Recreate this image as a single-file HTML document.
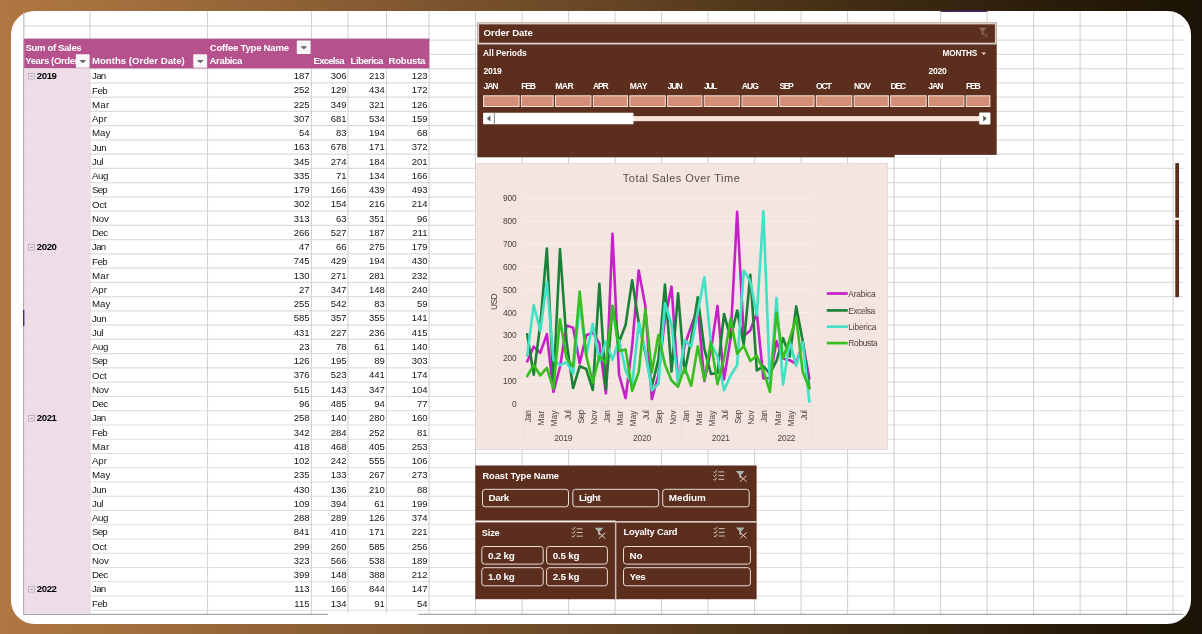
<!DOCTYPE html>
<html><head><meta charset="utf-8"><title>Coffee Sales Pivot</title>
<style>
html,body{margin:0;padding:0}
body{width:1202px;height:634px;overflow:hidden;position:relative;font-family:"Liberation Sans",sans-serif;background:linear-gradient(90deg,#af7742 0%,#a06d3c 12.5%,#8e6135 25%,#7a532d 37.5%,#674625 50%,#50371a 62.4%,#3c2912 74.9%,#2a1c0a 87.4%,#1b1305 100%);}
#root{position:absolute;left:0;top:0;width:1202px;height:634px;will-change:transform}
.panel{position:absolute;left:11.1px;top:11.1px;width:1180.2px;height:612.7px;background:#fff;border-radius:23.5px;}
svg{position:absolute;left:0;top:0}
.t,.h,.n,.y,.s,.c{position:absolute;white-space:nowrap}
.t{font-size:9.7px;line-height:14px;color:#141414}
.h{font-size:9.6px;line-height:14px;color:#fff;font-weight:bold}
.n{font-size:9.5px;line-height:14px;color:#141414;text-align:right;width:40px}
.y{font-size:9.6px;line-height:14px;color:#000;font-weight:bold}
.s{color:#fff;font-weight:bold;font-size:9px;line-height:12px}
.c{color:#4d423e;font-size:8.4px;line-height:10px}
</style></head><body>
<div id="root">
<div class="panel"></div>
<svg width="1202" height="634" viewBox="0 0 1202 634"><path d="M23.3 25.84H1183.3M23.3 40.09H1183.3M23.3 54.35H1183.3M23.3 68.60H1183.3M23.3 82.85H1183.3M23.3 97.11H1183.3M23.3 111.36H1183.3M23.3 125.61H1183.3M23.3 139.87H1183.3M23.3 154.12H1183.3M23.3 168.37H1183.3M23.3 182.63H1183.3M23.3 196.88H1183.3M23.3 211.13H1183.3M23.3 225.39H1183.3M23.3 239.64H1183.3M23.3 253.89H1183.3M23.3 268.15H1183.3M23.3 282.40H1183.3M23.3 296.65H1183.3M23.3 310.91H1183.3M23.3 325.16H1183.3M23.3 339.41H1183.3M23.3 353.67H1183.3M23.3 367.92H1183.3M23.3 382.17H1183.3M23.3 396.43H1183.3M23.3 410.68H1183.3M23.3 424.93H1183.3M23.3 439.19H1183.3M23.3 453.44H1183.3M23.3 467.69H1183.3M23.3 481.95H1183.3M23.3 496.20H1183.3M23.3 510.45H1183.3M23.3 524.71H1183.3M23.3 538.96H1183.3M23.3 553.21H1183.3M23.3 567.47H1183.3M23.3 581.72H1183.3M23.3 595.97H1183.3M23.3 610.23H1183.3" stroke="#dddddd" stroke-width="1.1" fill="none"/><path d="M89.90 11.2V614.3M207.50 11.2V614.3M311.50 11.2V614.3M348.00 11.2V614.3M386.50 11.2V614.3M429.10 11.2V614.3M475.60 11.2V614.3M522.10 11.2V614.3M568.60 11.2V614.3M615.10 11.2V614.3M661.60 11.2V614.3M708.10 11.2V614.3M754.60 11.2V614.3M801.10 11.2V614.3M847.60 11.2V614.3M894.10 11.2V614.3M940.60 11.2V614.3M987.10 11.2V614.3M1033.60 11.2V614.3M1080.10 11.2V614.3M1126.60 11.2V614.3M1173.10 11.2V614.3" stroke="#d3d3d3" stroke-width="1.1" fill="none"/><path d="M23.8 12.6V38.6" stroke="#c4c4c4" stroke-width="1.3" fill="none"/><path d="M23.8 38.6V614.3" stroke="#a49aa0" stroke-width="1.2" fill="none"/><path d="M23.3 614.3H1183.3" stroke="#a8a8a8" stroke-width="1.2" fill="none"/><rect x="328.00" y="613.00" width="90.30" height="3.00" fill="#fff"/><path d="M940.6 11.4H987.3" stroke="#3c2a7a" stroke-width="1.4"/><path d="M24 310V326" stroke="#3b2a86" stroke-width="2"/><rect x="1175.30" y="163.10" width="3.70" height="54.60" fill="#5b2e1e"/><rect x="1175.30" y="219.90" width="3.70" height="77.30" fill="#5b2e1e"/><rect x="24.20" y="39.30" width="405.10" height="29.05" fill="#b5518c"/><rect x="24.20" y="38.60" width="405.10" height="1.00" fill="#9a477b"/><rect x="24.40" y="68.35" width="65.30" height="545.45" fill="#eedde7"/></svg>
<div class="h" style="left:25.4px;top:40.5px;letter-spacing:-0.357px;">Sum of Sales</div>
<div class="h" style="left:209.8px;top:40.5px;letter-spacing:-0.253px;">Coffee Type Name</div>
<div class="h" style="left:25.2px;top:54.4px;width:50.4px;overflow:hidden;letter-spacing:-0.391px;">Years (Order Date)</div>
<div class="h" style="left:92.0px;top:54.4px;">Months (Order Date)</div>
<div class="h" style="left:209.6px;top:54.4px;letter-spacing:-0.402px;">Arabica</div>
<div class="h" style="left:313.6px;top:54.4px;letter-spacing:-0.795px;">Excelsa</div>
<div class="h" style="left:350.6px;top:54.4px;letter-spacing:-0.577px;">Liberica</div>
<div class="h" style="left:388.6px;top:54.4px;letter-spacing:-0.257px;">Robusta</div>
<svg width="1202" height="634" viewBox="0 0 1202 634"><rect x="75.80" y="54.25" width="13.8" height="13.6" rx="0.8" fill="#f8f6f7"/><path d="M79.4 60.1h6.8l-3.4 3.2z" fill="#666"/><rect x="193.30" y="54.25" width="13.8" height="13.6" rx="0.8" fill="#f8f6f7"/><path d="M196.9 60.1h6.8l-3.4 3.2z" fill="#666"/><rect x="296.80" y="40.39" width="13.8" height="13.6" rx="0.8" fill="#f8f6f7"/><path d="M300.4 46.3h6.8l-3.4 3.2z" fill="#666"/><rect x="28.70" y="73.43" width="5.60" height="5.60" fill="#f3e7ee" stroke="#aa9ea6" stroke-width="0.7"/><path d="M30 76.23h3" stroke="#7a7a7a" stroke-width="0.8"/><rect x="28.70" y="244.47" width="5.60" height="5.60" fill="#f3e7ee" stroke="#aa9ea6" stroke-width="0.7"/><path d="M30 247.27h3" stroke="#7a7a7a" stroke-width="0.8"/><rect x="28.70" y="415.51" width="5.60" height="5.60" fill="#f3e7ee" stroke="#aa9ea6" stroke-width="0.7"/><path d="M30 418.31h3" stroke="#7a7a7a" stroke-width="0.8"/><rect x="28.70" y="586.55" width="5.60" height="5.60" fill="#f3e7ee" stroke="#aa9ea6" stroke-width="0.7"/><path d="M30 589.35h3" stroke="#7a7a7a" stroke-width="0.8"/></svg>
<div class="y" style="left:36.8px;top:69.1px;letter-spacing:-0.414px;">2019</div>
<div class="t" style="left:92.0px;top:69.3px;letter-spacing:-0.680px;">Jan</div>
<div class="n" style="left:269.5px;top:69.1px">187</div>
<div class="n" style="left:306.5px;top:69.1px">306</div>
<div class="n" style="left:344.9px;top:69.1px">213</div>
<div class="n" style="left:387.5px;top:69.1px">123</div>
<div class="t" style="left:92.0px;top:83.6px;letter-spacing:-0.538px;">Feb</div>
<div class="n" style="left:269.5px;top:83.4px">252</div>
<div class="n" style="left:306.5px;top:83.4px">129</div>
<div class="n" style="left:344.9px;top:83.4px">434</div>
<div class="n" style="left:387.5px;top:83.4px">172</div>
<div class="t" style="left:92.0px;top:97.8px;letter-spacing:0.232px;">Mar</div>
<div class="n" style="left:269.5px;top:97.6px">225</div>
<div class="n" style="left:306.5px;top:97.6px">349</div>
<div class="n" style="left:344.9px;top:97.6px">321</div>
<div class="n" style="left:387.5px;top:97.6px">126</div>
<div class="t" style="left:92.0px;top:112.1px;letter-spacing:-0.098px;">Apr</div>
<div class="n" style="left:269.5px;top:111.9px">307</div>
<div class="n" style="left:306.5px;top:111.9px">681</div>
<div class="n" style="left:344.9px;top:111.9px">534</div>
<div class="n" style="left:387.5px;top:111.9px">159</div>
<div class="t" style="left:92.0px;top:126.3px;letter-spacing:0.025px;">May</div>
<div class="n" style="left:269.5px;top:126.1px">54</div>
<div class="n" style="left:306.5px;top:126.1px">83</div>
<div class="n" style="left:344.9px;top:126.1px">194</div>
<div class="n" style="left:387.5px;top:126.1px">68</div>
<div class="t" style="left:92.0px;top:140.6px;letter-spacing:-0.546px;">Jun</div>
<div class="n" style="left:269.5px;top:140.4px">163</div>
<div class="n" style="left:306.5px;top:140.4px">678</div>
<div class="n" style="left:344.9px;top:140.4px">171</div>
<div class="n" style="left:387.5px;top:140.4px">372</div>
<div class="t" style="left:92.0px;top:154.8px;letter-spacing:-0.467px;">Jul</div>
<div class="n" style="left:269.5px;top:154.6px">345</div>
<div class="n" style="left:306.5px;top:154.6px">274</div>
<div class="n" style="left:344.9px;top:154.6px">184</div>
<div class="n" style="left:387.5px;top:154.6px">201</div>
<div class="t" style="left:92.0px;top:169.1px;letter-spacing:-0.420px;">Aug</div>
<div class="n" style="left:269.5px;top:168.9px">335</div>
<div class="n" style="left:306.5px;top:168.9px">71</div>
<div class="n" style="left:344.9px;top:168.9px">134</div>
<div class="n" style="left:387.5px;top:168.9px">166</div>
<div class="t" style="left:92.0px;top:183.4px;letter-spacing:-0.753px;">Sep</div>
<div class="n" style="left:269.5px;top:183.2px">179</div>
<div class="n" style="left:306.5px;top:183.2px">166</div>
<div class="n" style="left:344.9px;top:183.2px">439</div>
<div class="n" style="left:387.5px;top:183.2px">493</div>
<div class="t" style="left:92.0px;top:197.6px;letter-spacing:-0.130px;">Oct</div>
<div class="n" style="left:269.5px;top:197.4px">302</div>
<div class="n" style="left:306.5px;top:197.4px">154</div>
<div class="n" style="left:344.9px;top:197.4px">216</div>
<div class="n" style="left:387.5px;top:197.4px">214</div>
<div class="t" style="left:92.0px;top:211.9px;letter-spacing:-0.250px;">Nov</div>
<div class="n" style="left:269.5px;top:211.7px">313</div>
<div class="n" style="left:306.5px;top:211.7px">63</div>
<div class="n" style="left:344.9px;top:211.7px">351</div>
<div class="n" style="left:387.5px;top:211.7px">96</div>
<div class="t" style="left:92.0px;top:226.1px;letter-spacing:-0.517px;">Dec</div>
<div class="n" style="left:269.5px;top:225.9px">266</div>
<div class="n" style="left:306.5px;top:225.9px">527</div>
<div class="n" style="left:344.9px;top:225.9px">187</div>
<div class="n" style="left:387.5px;top:225.9px">211</div>
<div class="y" style="left:36.8px;top:240.2px;letter-spacing:-0.414px;">2020</div>
<div class="t" style="left:92.0px;top:240.4px;letter-spacing:-0.680px;">Jan</div>
<div class="n" style="left:269.5px;top:240.2px">47</div>
<div class="n" style="left:306.5px;top:240.2px">66</div>
<div class="n" style="left:344.9px;top:240.2px">275</div>
<div class="n" style="left:387.5px;top:240.2px">179</div>
<div class="t" style="left:92.0px;top:254.6px;letter-spacing:-0.538px;">Feb</div>
<div class="n" style="left:269.5px;top:254.4px">745</div>
<div class="n" style="left:306.5px;top:254.4px">429</div>
<div class="n" style="left:344.9px;top:254.4px">194</div>
<div class="n" style="left:387.5px;top:254.4px">430</div>
<div class="t" style="left:92.0px;top:268.9px;letter-spacing:0.232px;">Mar</div>
<div class="n" style="left:269.5px;top:268.7px">130</div>
<div class="n" style="left:306.5px;top:268.7px">271</div>
<div class="n" style="left:344.9px;top:268.7px">281</div>
<div class="n" style="left:387.5px;top:268.7px">232</div>
<div class="t" style="left:92.0px;top:283.1px;letter-spacing:-0.098px;">Apr</div>
<div class="n" style="left:269.5px;top:282.9px">27</div>
<div class="n" style="left:306.5px;top:282.9px">347</div>
<div class="n" style="left:344.9px;top:282.9px">148</div>
<div class="n" style="left:387.5px;top:282.9px">240</div>
<div class="t" style="left:92.0px;top:297.4px;letter-spacing:0.025px;">May</div>
<div class="n" style="left:269.5px;top:297.2px">255</div>
<div class="n" style="left:306.5px;top:297.2px">542</div>
<div class="n" style="left:344.9px;top:297.2px">83</div>
<div class="n" style="left:387.5px;top:297.2px">59</div>
<div class="t" style="left:92.0px;top:311.6px;letter-spacing:-0.546px;">Jun</div>
<div class="n" style="left:269.5px;top:311.4px">585</div>
<div class="n" style="left:306.5px;top:311.4px">357</div>
<div class="n" style="left:344.9px;top:311.4px">355</div>
<div class="n" style="left:387.5px;top:311.4px">141</div>
<div class="t" style="left:92.0px;top:325.9px;letter-spacing:-0.467px;">Jul</div>
<div class="n" style="left:269.5px;top:325.7px">431</div>
<div class="n" style="left:306.5px;top:325.7px">227</div>
<div class="n" style="left:344.9px;top:325.7px">236</div>
<div class="n" style="left:387.5px;top:325.7px">415</div>
<div class="t" style="left:92.0px;top:340.1px;letter-spacing:-0.420px;">Aug</div>
<div class="n" style="left:269.5px;top:339.9px">23</div>
<div class="n" style="left:306.5px;top:339.9px">78</div>
<div class="n" style="left:344.9px;top:339.9px">61</div>
<div class="n" style="left:387.5px;top:339.9px">140</div>
<div class="t" style="left:92.0px;top:354.4px;letter-spacing:-0.753px;">Sep</div>
<div class="n" style="left:269.5px;top:354.2px">126</div>
<div class="n" style="left:306.5px;top:354.2px">195</div>
<div class="n" style="left:344.9px;top:354.2px">89</div>
<div class="n" style="left:387.5px;top:354.2px">303</div>
<div class="t" style="left:92.0px;top:368.6px;letter-spacing:-0.130px;">Oct</div>
<div class="n" style="left:269.5px;top:368.4px">376</div>
<div class="n" style="left:306.5px;top:368.4px">523</div>
<div class="n" style="left:344.9px;top:368.4px">441</div>
<div class="n" style="left:387.5px;top:368.4px">174</div>
<div class="t" style="left:92.0px;top:382.9px;letter-spacing:-0.250px;">Nov</div>
<div class="n" style="left:269.5px;top:382.7px">515</div>
<div class="n" style="left:306.5px;top:382.7px">143</div>
<div class="n" style="left:344.9px;top:382.7px">347</div>
<div class="n" style="left:387.5px;top:382.7px">104</div>
<div class="t" style="left:92.0px;top:397.2px;letter-spacing:-0.517px;">Dec</div>
<div class="n" style="left:269.5px;top:397.0px">96</div>
<div class="n" style="left:306.5px;top:397.0px">485</div>
<div class="n" style="left:344.9px;top:397.0px">94</div>
<div class="n" style="left:387.5px;top:397.0px">77</div>
<div class="y" style="left:36.8px;top:411.2px;letter-spacing:-0.414px;">2021</div>
<div class="t" style="left:92.0px;top:411.4px;letter-spacing:-0.680px;">Jan</div>
<div class="n" style="left:269.5px;top:411.2px">258</div>
<div class="n" style="left:306.5px;top:411.2px">140</div>
<div class="n" style="left:344.9px;top:411.2px">280</div>
<div class="n" style="left:387.5px;top:411.2px">160</div>
<div class="t" style="left:92.0px;top:425.7px;letter-spacing:-0.538px;">Feb</div>
<div class="n" style="left:269.5px;top:425.5px">342</div>
<div class="n" style="left:306.5px;top:425.5px">284</div>
<div class="n" style="left:344.9px;top:425.5px">252</div>
<div class="n" style="left:387.5px;top:425.5px">81</div>
<div class="t" style="left:92.0px;top:439.9px;letter-spacing:0.232px;">Mar</div>
<div class="n" style="left:269.5px;top:439.7px">418</div>
<div class="n" style="left:306.5px;top:439.7px">468</div>
<div class="n" style="left:344.9px;top:439.7px">405</div>
<div class="n" style="left:387.5px;top:439.7px">253</div>
<div class="t" style="left:92.0px;top:454.2px;letter-spacing:-0.098px;">Apr</div>
<div class="n" style="left:269.5px;top:454.0px">102</div>
<div class="n" style="left:306.5px;top:454.0px">242</div>
<div class="n" style="left:344.9px;top:454.0px">555</div>
<div class="n" style="left:387.5px;top:454.0px">106</div>
<div class="t" style="left:92.0px;top:468.4px;letter-spacing:0.025px;">May</div>
<div class="n" style="left:269.5px;top:468.2px">235</div>
<div class="n" style="left:306.5px;top:468.2px">133</div>
<div class="n" style="left:344.9px;top:468.2px">267</div>
<div class="n" style="left:387.5px;top:468.2px">273</div>
<div class="t" style="left:92.0px;top:482.7px;letter-spacing:-0.546px;">Jun</div>
<div class="n" style="left:269.5px;top:482.5px">430</div>
<div class="n" style="left:306.5px;top:482.5px">136</div>
<div class="n" style="left:344.9px;top:482.5px">210</div>
<div class="n" style="left:387.5px;top:482.5px">88</div>
<div class="t" style="left:92.0px;top:496.9px;letter-spacing:-0.467px;">Jul</div>
<div class="n" style="left:269.5px;top:496.7px">109</div>
<div class="n" style="left:306.5px;top:496.7px">394</div>
<div class="n" style="left:344.9px;top:496.7px">61</div>
<div class="n" style="left:387.5px;top:496.7px">199</div>
<div class="t" style="left:92.0px;top:511.2px;letter-spacing:-0.420px;">Aug</div>
<div class="n" style="left:269.5px;top:511.0px">288</div>
<div class="n" style="left:306.5px;top:511.0px">289</div>
<div class="n" style="left:344.9px;top:511.0px">126</div>
<div class="n" style="left:387.5px;top:511.0px">374</div>
<div class="t" style="left:92.0px;top:525.4px;letter-spacing:-0.753px;">Sep</div>
<div class="n" style="left:269.5px;top:525.2px">841</div>
<div class="n" style="left:306.5px;top:525.2px">410</div>
<div class="n" style="left:344.9px;top:525.2px">171</div>
<div class="n" style="left:387.5px;top:525.2px">221</div>
<div class="t" style="left:92.0px;top:539.7px;letter-spacing:-0.130px;">Oct</div>
<div class="n" style="left:269.5px;top:539.5px">299</div>
<div class="n" style="left:306.5px;top:539.5px">260</div>
<div class="n" style="left:344.9px;top:539.5px">585</div>
<div class="n" style="left:387.5px;top:539.5px">256</div>
<div class="t" style="left:92.0px;top:553.9px;letter-spacing:-0.250px;">Nov</div>
<div class="n" style="left:269.5px;top:553.7px">323</div>
<div class="n" style="left:306.5px;top:553.7px">566</div>
<div class="n" style="left:344.9px;top:553.7px">538</div>
<div class="n" style="left:387.5px;top:553.7px">189</div>
<div class="t" style="left:92.0px;top:568.2px;letter-spacing:-0.517px;">Dec</div>
<div class="n" style="left:269.5px;top:568.0px">399</div>
<div class="n" style="left:306.5px;top:568.0px">148</div>
<div class="n" style="left:344.9px;top:568.0px">388</div>
<div class="n" style="left:387.5px;top:568.0px">212</div>
<div class="y" style="left:36.8px;top:582.2px;letter-spacing:-0.414px;">2022</div>
<div class="t" style="left:92.0px;top:582.4px;letter-spacing:-0.680px;">Jan</div>
<div class="n" style="left:269.5px;top:582.2px">113</div>
<div class="n" style="left:306.5px;top:582.2px">166</div>
<div class="n" style="left:344.9px;top:582.2px">844</div>
<div class="n" style="left:387.5px;top:582.2px">147</div>
<div class="t" style="left:92.0px;top:596.7px;letter-spacing:-0.538px;">Feb</div>
<div class="n" style="left:269.5px;top:596.5px">115</div>
<div class="n" style="left:306.5px;top:596.5px">134</div>
<div class="n" style="left:344.9px;top:596.5px">91</div>
<div class="n" style="left:387.5px;top:596.5px">54</div>
<svg width="1202" height="634" viewBox="0 0 1202 634"><rect x="477.30" y="22.60" width="519.40" height="134.70" fill="#5b2e1e"/><rect x="894.60" y="154.90" width="102.60" height="2.90" fill="#fff"/><rect x="478.20" y="23.50" width="517.60" height="20.10" fill="none" stroke="#d9cec7" stroke-width="1.8"/><path d="M981.4 52.5h4.8l-2.4 2.6z" fill="#e8dcd6"/><g opacity="0.36" fill="none" stroke="#d8ccc6" stroke-width="1"><path d="M978.6 27.6h8l-3 3.6v4.2l-2 -1.2v-3z" fill="#d8ccc6" stroke="none"/><path d="M983.6 33.2l4.6 4.6M988.2 33.2l-4.6 4.6"/></g><rect x="483.60" y="95.80" width="35.48" height="10.70" fill="#d48e75" stroke="#f6e3db" stroke-width="1.0"/><rect x="521.38" y="95.80" width="31.83" height="10.70" fill="#d48e75" stroke="#f6e3db" stroke-width="1.0"/><rect x="555.51" y="95.80" width="35.48" height="10.70" fill="#d48e75" stroke="#f6e3db" stroke-width="1.0"/><rect x="593.29" y="95.80" width="34.26" height="10.70" fill="#d48e75" stroke="#f6e3db" stroke-width="1.0"/><rect x="629.86" y="95.80" width="35.48" height="10.70" fill="#d48e75" stroke="#f6e3db" stroke-width="1.0"/><rect x="667.64" y="95.80" width="34.26" height="10.70" fill="#d48e75" stroke="#f6e3db" stroke-width="1.0"/><rect x="704.20" y="95.80" width="35.48" height="10.70" fill="#d48e75" stroke="#f6e3db" stroke-width="1.0"/><rect x="741.99" y="95.80" width="35.48" height="10.70" fill="#d48e75" stroke="#f6e3db" stroke-width="1.0"/><rect x="779.77" y="95.80" width="34.26" height="10.70" fill="#d48e75" stroke="#f6e3db" stroke-width="1.0"/><rect x="816.33" y="95.80" width="35.48" height="10.70" fill="#d48e75" stroke="#f6e3db" stroke-width="1.0"/><rect x="854.12" y="95.80" width="34.26" height="10.70" fill="#d48e75" stroke="#f6e3db" stroke-width="1.0"/><rect x="890.68" y="95.80" width="35.48" height="10.70" fill="#d48e75" stroke="#f6e3db" stroke-width="1.0"/><rect x="928.46" y="95.80" width="35.48" height="10.70" fill="#d48e75" stroke="#f6e3db" stroke-width="1.0"/><rect x="966.24" y="95.80" width="23.66" height="10.70" fill="#d48e75" stroke="#f6e3db" stroke-width="1.0"/><rect x="494.00" y="116.10" width="486.00" height="5.10" fill="#f9e3db"/><rect x="483.10" y="112.70" width="150.40" height="11.60" fill="#fff" rx="0.8"/><path d="M494.4 112.7V124.3" stroke="#9c9c9c" stroke-width="1.2"/><rect x="979.20" y="112.40" width="11.20" height="12.00" fill="#fff" rx="0.8"/><path d="M490.4 115.4v6l-3.6 -3z" fill="#5a5a5a"/><path d="M983.2 115.4v6l3.6 -3z" fill="#5a5a5a"/></svg>
<div class="s" style="left:483.6px;top:26.8px;font-size:9.6px;letter-spacing:-0.042px;">Order Date</div>
<div class="s" style="left:483.0px;top:47.2px;font-size:8.4px;">All Periods</div>
<div class="s" style="left:900px;width:77.1px;text-align:right;top:48.3px;font-size:8.2px;letter-spacing:-0.155px;">MONTHS</div>
<div class="s" style="left:483.6px;top:65.0px;font-size:8.6px;letter-spacing:-0.333px;">2019</div>
<div class="s" style="left:928.6px;top:65.0px;font-size:8.6px;letter-spacing:-0.333px;">2020</div>
<div class="s" style="left:483.4px;top:80.2px;font-size:8.6px;letter-spacing:-1.038px;">JAN</div>
<div class="s" style="left:521.2px;top:80.2px;font-size:8.6px;letter-spacing:-1.262px;">FEB</div>
<div class="s" style="left:555.3px;top:80.2px;font-size:8.6px;letter-spacing:-0.642px;">MAR</div>
<div class="s" style="left:593.1px;top:80.2px;font-size:8.6px;letter-spacing:-1.260px;">APR</div>
<div class="s" style="left:629.7px;top:80.2px;font-size:8.6px;letter-spacing:-0.253px;">MAY</div>
<div class="s" style="left:667.4px;top:80.2px;font-size:8.6px;letter-spacing:-0.942px;">JUN</div>
<div class="s" style="left:704.0px;top:80.2px;font-size:8.6px;letter-spacing:-1.523px;">JUL</div>
<div class="s" style="left:741.8px;top:80.2px;font-size:8.6px;letter-spacing:-0.934px;">AUG</div>
<div class="s" style="left:779.6px;top:80.2px;font-size:8.6px;letter-spacing:-1.490px;">SEP</div>
<div class="s" style="left:816.1px;top:80.2px;font-size:8.6px;letter-spacing:-1.194px;">OCT</div>
<div class="s" style="left:853.9px;top:80.2px;font-size:8.6px;letter-spacing:-0.776px;">NOV</div>
<div class="s" style="left:890.5px;top:80.2px;font-size:8.6px;letter-spacing:-1.260px;">DEC</div>
<div class="s" style="left:928.3px;top:80.2px;font-size:8.6px;letter-spacing:-1.038px;">JAN</div>
<div class="s" style="left:966.0px;top:80.2px;font-size:8.6px;letter-spacing:-1.262px;">FEB</div>
<svg width="1202" height="634" viewBox="0 0 1202 634"><rect x="475.70" y="163.30" width="411.70" height="286.00" fill="#f3e5df" stroke="#dad2cf" stroke-width="0.7"/><path d="M523.9 381.42H812.6M523.9 358.54H812.6M523.9 335.66H812.6M523.9 312.78H812.6M523.9 289.90H812.6M523.9 267.02H812.6M523.9 244.14H812.6M523.9 221.26H812.6M523.9 198.38H812.6" stroke="#f9f0ec" stroke-width="1" fill="none"/><path d="M523.9 405.10H812.6" stroke="#eadcd5" stroke-width="1" fill="none"/><path d="M523.90 405.3V444M602.64 405.3V444M681.37 405.3V444M760.11 405.3V444M812.60 405.3V444" stroke="#ecdfd9" stroke-width="0.9" fill="none"/><polyline points="527.18,361.51 533.74,346.64 540.30,352.82 546.86,334.06 553.43,391.94 559.99,367.01 566.55,325.36 573.11,327.65 579.67,363.34 586.23,335.20 592.79,332.69 599.36,343.44 605.92,393.55 612.48,233.84 619.04,374.56 625.60,398.12 632.16,345.96 638.72,270.45 645.29,305.69 651.85,399.04 658.41,375.47 664.97,318.27 671.53,286.47 678.09,382.34 684.65,345.27 691.21,326.05 697.78,308.66 704.34,380.96 710.90,350.53 717.46,305.92 724.02,379.36 730.58,338.41 737.14,211.88 743.71,335.89 750.27,330.40 756.83,313.01 763.39,378.45 769.95,377.99 776.51,341.15 783.07,358.54 789.64,360.14 796.20,363.80 802.76,342.52 809.32,378.45" fill="none" stroke="#c621c9" stroke-width="2.6" stroke-linejoin="round" stroke-linecap="round"/><polyline points="527.18,334.29 533.74,374.78 540.30,324.45 546.86,248.49 553.43,385.31 559.99,249.17 566.55,341.61 573.11,388.06 579.67,366.32 586.23,369.06 592.79,389.89 599.36,283.72 605.92,389.20 612.48,306.14 619.04,342.30 625.60,324.91 632.16,280.29 638.72,322.62 645.29,352.36 651.85,386.45 658.41,359.68 664.97,284.64 671.53,371.58 678.09,293.33 684.65,372.27 691.21,339.32 697.78,297.22 704.34,348.93 710.90,373.87 717.46,373.18 724.02,314.15 730.58,338.18 737.14,310.49 743.71,344.81 750.27,274.80 756.83,370.44 763.39,366.32 769.95,373.64 776.51,360.83 783.07,338.18 789.64,356.48 796.20,306.37 802.76,341.15 809.32,388.28" fill="none" stroke="#1b8139" stroke-width="2.6" stroke-linejoin="round" stroke-linecap="round"/><polyline points="527.18,355.57 533.74,305.00 540.30,330.86 546.86,282.12 553.43,359.91 559.99,365.18 566.55,362.20 573.11,373.64 579.67,303.86 586.23,354.88 592.79,323.99 599.36,361.51 605.92,341.38 612.48,359.91 619.04,340.01 625.60,370.44 632.16,385.31 638.72,323.08 645.29,350.30 651.85,390.34 658.41,383.94 664.97,303.40 671.53,324.91 678.09,382.79 684.65,340.24 691.21,346.64 697.78,311.64 704.34,277.32 710.90,343.21 717.46,356.25 724.02,390.34 730.58,375.47 737.14,365.18 743.71,270.45 750.27,281.21 756.83,315.53 763.39,211.19 769.95,383.48 776.51,298.14 783.07,384.62 789.64,341.15 796.20,365.86 802.76,342.30 809.32,401.55" fill="none" stroke="#42e0c4" stroke-width="2.6" stroke-linejoin="round" stroke-linecap="round"/><polyline points="527.18,376.16 533.74,364.95 540.30,375.47 546.86,367.92 553.43,388.74 559.99,319.19 566.55,358.31 573.11,366.32 579.67,291.50 586.23,355.34 592.79,382.34 599.36,356.02 605.92,363.34 612.48,305.92 619.04,351.22 625.60,349.39 632.16,390.80 638.72,372.04 645.29,309.35 651.85,372.27 658.41,334.97 664.97,364.49 671.53,380.50 678.09,386.68 684.65,367.69 691.21,385.77 697.78,346.41 704.34,380.05 710.90,341.84 717.46,384.17 724.02,358.77 730.58,318.73 737.14,353.74 743.71,345.73 750.27,361.06 756.83,355.79 763.39,370.67 769.95,391.94 776.51,312.55 783.07,358.54 789.64,339.09 796.20,317.58 802.76,372.04 809.32,388.28" fill="none" stroke="#37be21" stroke-width="2.6" stroke-linejoin="round" stroke-linecap="round"/><path d="M826.8 293.5H847.8" stroke="#c621c9" stroke-width="2.7"/><path d="M826.8 310.4H847.8" stroke="#1b8139" stroke-width="2.7"/><path d="M826.8 326.7H847.8" stroke="#42e0c4" stroke-width="2.7"/><path d="M826.8 343.1H847.8" stroke="#37be21" stroke-width="2.7"/></svg>
<div class="c" style="left:475.7px;width:411.7px;top:171.3px;text-align:center;font-size:11px;line-height:14px;color:#5a4b46;letter-spacing:0.467px;">Total Sales Over Time</div>
<div class="c" style="left:848.3px;top:288.6px;letter-spacing:-0.169px;">Arabica</div>
<div class="c" style="left:848.3px;top:305.5px;letter-spacing:-0.416px;">Excelsa</div>
<div class="c" style="left:848.3px;top:321.8px;letter-spacing:-0.190px;">Liberica</div>
<div class="c" style="left:848.3px;top:338.2px;letter-spacing:-0.312px;">Robusta</div>
<div class="c" style="left:486px;width:30.4px;text-align:right;top:399.0px;letter-spacing:-0.172px;">0</div>
<div class="c" style="left:486px;width:30.4px;text-align:right;top:376.1px;letter-spacing:-0.172px;">100</div>
<div class="c" style="left:486px;width:30.4px;text-align:right;top:353.2px;letter-spacing:-0.172px;">200</div>
<div class="c" style="left:486px;width:30.4px;text-align:right;top:330.4px;letter-spacing:-0.172px;">300</div>
<div class="c" style="left:486px;width:30.4px;text-align:right;top:307.5px;letter-spacing:-0.172px;">400</div>
<div class="c" style="left:486px;width:30.4px;text-align:right;top:284.6px;letter-spacing:-0.172px;">500</div>
<div class="c" style="left:486px;width:30.4px;text-align:right;top:261.7px;letter-spacing:-0.172px;">600</div>
<div class="c" style="left:486px;width:30.4px;text-align:right;top:238.8px;letter-spacing:-0.172px;">700</div>
<div class="c" style="left:486px;width:30.4px;text-align:right;top:216.0px;letter-spacing:-0.172px;">800</div>
<div class="c" style="left:486px;width:30.4px;text-align:right;top:193.1px;letter-spacing:-0.172px;">900</div>
<div class="c" style="left:517.18px;top:411px;width:20px;height:10px;text-align:right;transform:translate(1.4px,4.6px) rotate(-90deg);letter-spacing:-0.616px;">Jan</div>
<div class="c" style="left:530.30px;top:411px;width:20px;height:10px;text-align:right;transform:translate(1.4px,4.6px) rotate(-90deg);letter-spacing:0.166px;">Mar</div>
<div class="c" style="left:543.43px;top:411px;width:20px;height:10px;text-align:right;transform:translate(1.4px,4.6px) rotate(-90deg);letter-spacing:-0.015px;">May</div>
<div class="c" style="left:556.55px;top:411px;width:20px;height:10px;text-align:right;transform:translate(1.4px,4.6px) rotate(-90deg);letter-spacing:-0.426px;">Jul</div>
<div class="c" style="left:569.67px;top:411px;width:20px;height:10px;text-align:right;transform:translate(1.4px,4.6px) rotate(-90deg);letter-spacing:-0.682px;">Sep</div>
<div class="c" style="left:582.79px;top:411px;width:20px;height:10px;text-align:right;transform:translate(1.4px,4.6px) rotate(-90deg);letter-spacing:-0.249px;">Nov</div>
<div class="c" style="left:595.92px;top:411px;width:20px;height:10px;text-align:right;transform:translate(1.4px,4.6px) rotate(-90deg);letter-spacing:-0.616px;">Jan</div>
<div class="c" style="left:609.04px;top:411px;width:20px;height:10px;text-align:right;transform:translate(1.4px,4.6px) rotate(-90deg);letter-spacing:0.166px;">Mar</div>
<div class="c" style="left:622.16px;top:411px;width:20px;height:10px;text-align:right;transform:translate(1.4px,4.6px) rotate(-90deg);letter-spacing:-0.015px;">May</div>
<div class="c" style="left:635.29px;top:411px;width:20px;height:10px;text-align:right;transform:translate(1.4px,4.6px) rotate(-90deg);letter-spacing:-0.426px;">Jul</div>
<div class="c" style="left:648.41px;top:411px;width:20px;height:10px;text-align:right;transform:translate(1.4px,4.6px) rotate(-90deg);letter-spacing:-0.682px;">Sep</div>
<div class="c" style="left:661.53px;top:411px;width:20px;height:10px;text-align:right;transform:translate(1.4px,4.6px) rotate(-90deg);letter-spacing:-0.249px;">Nov</div>
<div class="c" style="left:674.65px;top:411px;width:20px;height:10px;text-align:right;transform:translate(1.4px,4.6px) rotate(-90deg);letter-spacing:-0.616px;">Jan</div>
<div class="c" style="left:687.78px;top:411px;width:20px;height:10px;text-align:right;transform:translate(1.4px,4.6px) rotate(-90deg);letter-spacing:0.166px;">Mar</div>
<div class="c" style="left:700.90px;top:411px;width:20px;height:10px;text-align:right;transform:translate(1.4px,4.6px) rotate(-90deg);letter-spacing:-0.015px;">May</div>
<div class="c" style="left:714.02px;top:411px;width:20px;height:10px;text-align:right;transform:translate(1.4px,4.6px) rotate(-90deg);letter-spacing:-0.426px;">Jul</div>
<div class="c" style="left:727.14px;top:411px;width:20px;height:10px;text-align:right;transform:translate(1.4px,4.6px) rotate(-90deg);letter-spacing:-0.682px;">Sep</div>
<div class="c" style="left:740.27px;top:411px;width:20px;height:10px;text-align:right;transform:translate(1.4px,4.6px) rotate(-90deg);letter-spacing:-0.249px;">Nov</div>
<div class="c" style="left:753.39px;top:411px;width:20px;height:10px;text-align:right;transform:translate(1.4px,4.6px) rotate(-90deg);letter-spacing:-0.616px;">Jan</div>
<div class="c" style="left:766.51px;top:411px;width:20px;height:10px;text-align:right;transform:translate(1.4px,4.6px) rotate(-90deg);letter-spacing:0.166px;">Mar</div>
<div class="c" style="left:779.64px;top:411px;width:20px;height:10px;text-align:right;transform:translate(1.4px,4.6px) rotate(-90deg);letter-spacing:-0.015px;">May</div>
<div class="c" style="left:792.76px;top:411px;width:20px;height:10px;text-align:right;transform:translate(1.4px,4.6px) rotate(-90deg);letter-spacing:-0.426px;">Jul</div>
<div class="c" style="left:548.3px;width:30px;text-align:center;top:432.8px;letter-spacing:-0.172px;">2019</div>
<div class="c" style="left:627.0px;width:30px;text-align:center;top:432.8px;letter-spacing:-0.172px;">2020</div>
<div class="c" style="left:705.7px;width:30px;text-align:center;top:432.8px;letter-spacing:-0.172px;">2021</div>
<div class="c" style="left:771.4px;width:30px;text-align:center;top:432.8px;letter-spacing:-0.172px;">2022</div>
<div class="c" style="left:484.3px;top:296.6px;width:20px;text-align:center;transform:rotate(-90deg);letter-spacing:-0.512px;">USD</div>
<svg width="1202" height="634" viewBox="0 0 1202 634"><rect x="475.30" y="465.50" width="281.30" height="133.70" fill="#5b2e1e"/><rect x="475.30" y="520.50" width="140.40" height="1.90" fill="#f4eeeb"/><rect x="615.60" y="521.10" width="141.00" height="1.50" fill="#e4dad5"/><rect x="614.90" y="521.20" width="1.50" height="78.00" fill="#c9b6ad"/><g fill="none" stroke="#ddd2cc" stroke-width="0.9"><path d="M713.4 471.6l1.3 1.3l2.2 -2.9M718.3 471.9h5.9"/><path d="M713.4 475.3l1.3 1.3l2.2 -2.9M718.3 475.6h5.9"/><path d="M713.4 479.0l1.3 1.3l2.2 -2.9M718.3 479.3h5.9"/></g><path d="M735.9 470.9h8.6l-3.5 4v3.6l-1.7 -1v-2.6z" fill="#aab4af"/><path d="M740.1 475.8l6.4 5.8M746.5 475.8l-6.4 5.8" stroke="#e6dcd7" stroke-width="1" fill="none"/><rect x="482.50" y="489.30" width="86.00" height="17.50" fill="none" stroke="#eadfd9" stroke-width="1.0" rx="2.8"/><rect x="572.80" y="489.30" width="85.90" height="17.50" fill="none" stroke="#eadfd9" stroke-width="1.0" rx="2.8"/><rect x="662.70" y="489.30" width="86.50" height="17.50" fill="none" stroke="#eadfd9" stroke-width="1.0" rx="2.8"/><g fill="none" stroke="#ddd2cc" stroke-width="0.9"><path d="M571.8 528.5l1.3 1.3l2.2 -2.9M576.7 528.8h5.9"/><path d="M571.8 532.2l1.3 1.3l2.2 -2.9M576.7 532.5h5.9"/><path d="M571.8 535.9l1.3 1.3l2.2 -2.9M576.7 536.2h5.9"/></g><path d="M594.7 527.8h8.6l-3.5 4v3.6l-1.7 -1v-2.6z" fill="#aab4af"/><path d="M598.9 532.7l6.4 5.8M605.3 532.7l-6.4 5.8" stroke="#e6dcd7" stroke-width="1" fill="none"/><rect x="481.80" y="546.50" width="61.40" height="17.60" fill="none" stroke="#eadfd9" stroke-width="1.0" rx="2.8"/><rect x="546.60" y="546.50" width="60.80" height="17.60" fill="none" stroke="#eadfd9" stroke-width="1.0" rx="2.8"/><rect x="481.80" y="567.70" width="61.40" height="18.10" fill="none" stroke="#eadfd9" stroke-width="1.0" rx="2.8"/><rect x="546.60" y="567.70" width="60.80" height="18.10" fill="none" stroke="#eadfd9" stroke-width="1.0" rx="2.8"/><g fill="none" stroke="#ddd2cc" stroke-width="0.9"><path d="M713.8 528.3l1.3 1.3l2.2 -2.9M718.7 528.6h5.9"/><path d="M713.8 532.0l1.3 1.3l2.2 -2.9M718.7 532.3h5.9"/><path d="M713.8 535.7l1.3 1.3l2.2 -2.9M718.7 536.0h5.9"/></g><path d="M736.0 527.6h8.6l-3.5 4v3.6l-1.7 -1v-2.6z" fill="#aab4af"/><path d="M740.2 532.5l6.4 5.8M746.6 532.5l-6.4 5.8" stroke="#e6dcd7" stroke-width="1" fill="none"/><rect x="623.50" y="546.50" width="126.90" height="17.60" fill="none" stroke="#eadfd9" stroke-width="1.0" rx="2.8"/><rect x="623.50" y="567.70" width="126.90" height="18.10" fill="none" stroke="#eadfd9" stroke-width="1.0" rx="2.8"/></svg>
<div class="s" style="left:482.4px;top:469.9px;font-size:9.3px;letter-spacing:-0.050px;">Roast Type Name</div>
<div class="s" style="left:481.8px;top:526.7px;font-size:9.3px;letter-spacing:-0.227px;">Size</div>
<div class="s" style="left:623.5px;top:526.1px;font-size:9.3px;letter-spacing:-0.211px;">Loyalty Card</div>
<div class="s" style="left:488.6px;top:492.2px;font-size:9.9px;letter-spacing:-0.454px;">Dark</div>
<div class="s" style="left:578.9px;top:492.2px;font-size:9.9px;letter-spacing:-0.558px;">Light</div>
<div class="s" style="left:668.8px;top:492.2px;font-size:9.9px;letter-spacing:-0.067px;">Medium</div>
<div class="s" style="left:487.9px;top:549.5px;font-size:9.9px;letter-spacing:-0.211px;">0.2 kg</div>
<div class="s" style="left:552.7px;top:549.5px;font-size:9.9px;letter-spacing:-0.211px;">0.5 kg</div>
<div class="s" style="left:487.9px;top:571.0px;font-size:9.9px;letter-spacing:-0.211px;">1.0 kg</div>
<div class="s" style="left:552.7px;top:571.0px;font-size:9.9px;letter-spacing:-0.211px;">2.5 kg</div>
<div class="s" style="left:629.6px;top:549.5px;font-size:9.9px;letter-spacing:-0.298px;">No</div>
<div class="s" style="left:629.6px;top:571.0px;font-size:9.9px;letter-spacing:-0.423px;">Yes</div>
</div>
</body></html>
